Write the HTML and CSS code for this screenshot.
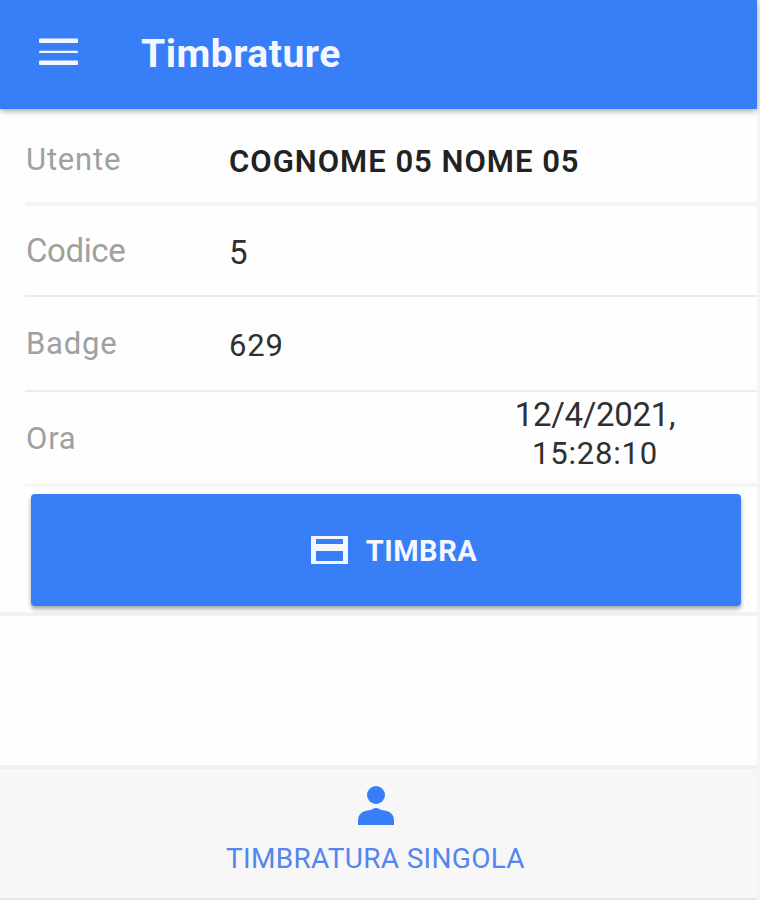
FILE: index.html
```html
<!DOCTYPE html>
<html lang="it">

<head>
    <meta charset="UTF-8">
    <meta name="viewport" content="width=device-width, initial-scale=1.0">
    <title>Timbrature</title>
    <link rel="stylesheet" href="styles.css">
</head>

<body>
    <div class="page">
        <header class="toolbar">
            <svg class="menu" viewBox="0 0 39 28">
                <rect x="0" y="0.5" width="39" height="4.5" rx="1" />
                <rect x="0" y="12.7" width="39" height="2.4" rx="1" />
                <rect x="0" y="22.5" width="39" height="4.5" rx="1" />
            </svg>
            <h1>Timbrature</h1>
        </header>

        <main class="content">
            <div class="item user">
                <label>Utente</label>
                <b class="value">COGNOME 05 NOME 05</b>
            </div>
            <div class="item code">
                <label>Codice</label>
                <span class="value">5</span>
            </div>
            <div class="item badge">
                <label>Badge</label>
                <span class="value">629</span>
            </div>
            <div class="item time">
                <label>Ora</label>
                <div class="clock">
                    <span class="date">12/4/2021,</span>
                    <span class="hour">15:28:10</span>
                </div>
            </div>
            <div class="action">
                <button class="stamp">
                    <svg class="card" viewBox="0 0 37 28">
                        <path fill-rule="evenodd" d="M1 0h35a1 1 0 0 1 1 1v26a1 1 0 0 1-1 1h-35a1 1 0 0 1-1-1v-26a1 1 0 0 1 1-1zM5 3v5h27v-5zM5 15v10h27v-10z" />
                    </svg>
                    <span>TIMBRA</span>
                </button>
            </div>
        </main>

        <footer class="tabs">
            <svg class="person" viewBox="0 0 36 39">
                <circle cx="18" cy="9" r="9" />
                <path d="M0 39v-4c0-7 4-10 12-11 2 0 3-2 6-2s4 2 6 2c8 1 12 4 12 11v4z" />
            </svg>
            <span class="tab-name">TIMBRATURA SINGOLA</span>
        </footer>
    </div>
</body>

</html>
```

FILE: styles.css
```css
* {
    box-sizing: border-box;
}

body {
    margin: 0;
    background-color: #f5f5f5;
    font-family: Roboto, "Liberation Sans", sans-serif;
    font-size: 31px;
    color: #303030;
}

.page {
    display: flex;
    flex-direction: column;
    width: 757px;
    height: 900px;
    background-color: #fefefe;
}

.toolbar {
    display: flex;
    align-items: center;
    height: 109px;
    padding-left: 39px;
    padding-bottom: 5px;
    background-color: #387ef7;
    box-shadow: 0 2px 6px rgba(0, 0, 0, 0.35);
}

.menu {
    width: 39px;
    height: 28px;
    fill: #f4f7ff;
}

h1 {
    margin: 4px 0 0 63px;
    font-size: 39px;
    font-weight: 700;
    letter-spacing: 0.5px;
    color: #f4f7ff;
}

.content {
    flex: 1;
}

.item {
    display: flex;
    align-items: center;
    margin-left: 25px;
    padding-left: 1px;
    border-bottom: 2px solid #ebebeb;
    letter-spacing: 0.8px;
}

label {
    width: 203px;
    color: #a0a0a0;
}

.item .value {
    padding-top: 4px;
}

.user {
    height: 97px;
    padding-top: 7px;
    border-bottom: 4px solid #f4f4f4;
}

.user .value {
    font-weight: 600;
    letter-spacing: 1px;
    color: #222;
}

.code {
    height: 91px;
    font-size: 33px;
    letter-spacing: -0.4px;
}

.badge {
    height: 95px;
}

.time {
    height: 95px;
    border-bottom: 4px solid #f6f6f6;
}

.time label {
    padding-top: 2px;
}

.clock {
    display: flex;
    flex-direction: column;
    align-items: center;
    width: 166px;
    margin-left: 283px;
    padding-bottom: 8px;
    line-height: 39px;
}

.date {
    font-size: 33px;
    letter-spacing: -0.3px;
}

.action {
    height: 129px;
    padding: 7px 16px 0 31px;
    border-bottom: 4px solid #f2f2f2;
}

.stamp {
    display: flex;
    align-items: center;
    justify-content: center;
    gap: 18px;
    width: 100%;
    height: 112px;
    padding: 1px 0 0 16px;
    border: 0;
    border-radius: 4px;
    background-color: #387ef7;
    box-shadow: 0 3px 4px rgba(0, 0, 0, 0.35);
    color: #f4f7ff;
    font-family: inherit;
    font-size: 29px;
    font-weight: 700;
    letter-spacing: 0.5px;
}

.card {
    width: 37px;
    height: 28px;
    margin-bottom: 2px;
    fill: #f4f7ff;
}

.tabs {
    display: flex;
    flex-direction: column;
    align-items: center;
    height: 135px;
    padding-top: 17px;
    padding-right: 6px;
    border-top: 4px solid #f0f0f0;
    border-bottom: 2px solid #e6e7e9;
    background-color: #f7f7f7;
    color: #5585ee;
}

.person {
    width: 36px;
    height: 39px;
    fill: #387ef7;
}

.tab-name {
    margin-top: 17px;
    font-size: 28px;
    letter-spacing: 0.3px;
}
```
